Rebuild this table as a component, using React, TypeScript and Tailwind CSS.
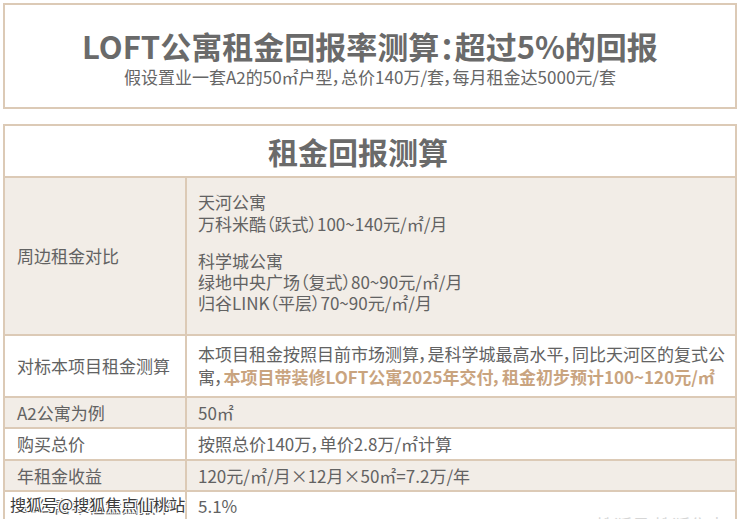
import React from "react";

const rows = [
  { label: "A2公寓为例", value: "50㎡", shade: true, h: "h-[31px]" },
  { label: "购买总价", value: "按照总价140万，单价2.8万/㎡计算", shade: false, h: "h-[32px]" },
  { label: "年租金收益", value: "120元/㎡/月×12月×50㎡=7.2万/年", shade: true, h: "h-[31px]" },
];

const App: React.FC = () => {
  return (
    <div className="relative w-[740px] h-[519px] overflow-hidden bg-white text-[#626262] font-['Noto_Sans_CJK_SC',sans-serif] [font-feature-settings:'palt']">
      <div className="mx-[3px] mt-[3px] h-[106px] border-2 border-[#dccab6] flex flex-col items-center pt-[22px]">
        <div className="text-[31px] leading-[37px] font-bold text-[#6a6a6a]">
          LOFT公寓租金回报率测算：超过5%的回报
        </div>
        <div className="text-[17px] leading-[22px] mt-[2px] text-[#666]">
          假设置业一套A2的50㎡户型，总价140万/套，每月租金达5000元/套
        </div>
      </div>

      <div className="mx-[3px] mt-[15px] border-2 border-[#dccab6] border-b-0">
        <div className="h-[50px] flex items-center justify-center pr-[24px] text-[30px] font-bold text-[#6a6a6a]">
          租金回报测算
        </div>

        <div className="flex border-t-2 border-[#dccab6] bg-[#f2ede7] h-[158px]">
          <div className="w-[182px] shrink-0 border-r-2 border-[#dccab6] flex items-center pl-3 text-[17px]">
            周边租金对比
          </div>
          <div className="pl-[11px] pt-[13px] text-[17px] leading-[21px]">
            <div>天河公寓</div>
            <div className="mt-[1px]">万科米酷（跃式）100~140元/㎡/月</div>
            <div className="mt-[16px]">科学城公寓</div>
            <div>绿地中央广场（复式）80~90元/㎡/月</div>
            <div>归谷LINK（平层）70~90元/㎡/月</div>
          </div>
        </div>

        <div className="flex border-t-2 border-[#dccab6] bg-white h-[62px]">
          <div className="w-[182px] shrink-0 border-r-2 border-[#dccab6] flex items-center pl-3 text-[17px]">
            对标本项目租金测算
          </div>
          <div className="pl-[11px] pt-[6px] text-[17px] leading-[23px] whitespace-nowrap overflow-hidden">
            <div>本项目租金按照目前市场测算，是科学城最高水平，同比天河区的复式公</div>
            <div>
              寓，
              <span className="font-bold text-[#c9a47f]">
                本项目带装修LOFT公寓2025年交付，租金初步预计100~120元/㎡
              </span>
            </div>
          </div>
        </div>

        {rows.map((r) => (
          <div
            key={r.label}
            className={`flex border-t-2 border-[#dccab6] ${r.h} ${r.shade ? "bg-[#f2ede7]" : "bg-white"}`}
          >
            <div className="w-[182px] shrink-0 border-r-2 border-[#dccab6] flex items-center pl-3 text-[17px]">
              {r.label}
            </div>
            <div className="flex items-center pl-[11px] text-[17px]">{r.value}</div>
          </div>
        ))}

        <div className="flex border-t-2 border-[#dccab6] bg-white h-[40px]">
          <div className="w-[182px] shrink-0 border-r-2 border-[#dccab6] flex items-start pt-[1px] pl-3 text-[17px]">
            A2公寓年租金回报率
          </div>
          <div className="flex items-start pt-[1px] pl-[11px] text-[17px]">5.1%</div>
        </div>
      </div>

      <div className="absolute left-[10px] top-[492px] text-[16px] leading-[24px] text-[#3a3a3a] [text-shadow:1px_1px_0_#fff,-1px_-1px_0_#fff,1px_-1px_0_#fff,-1px_1px_0_#fff]">
        搜狐号@搜狐焦点仙桃站
      </div>
      <div className="absolute left-[575px] top-[513px] text-[18px] leading-[24px] text-[#d6d6d6]">
        @ 搜狐号 搜狐焦点
      </div>
    </div>
  );
};

export default App;
